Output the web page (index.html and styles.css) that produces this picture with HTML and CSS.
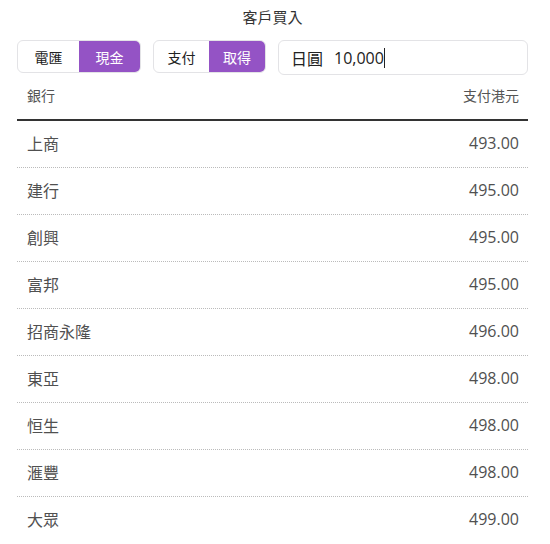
FILE: index.html
```html
<!DOCTYPE html>
<html>
<head>
<meta charset="utf-8">
<link rel="stylesheet" href="styles.css">
</head>
<body>
<div class="page">
  <div class="title">客戶買入</div>
  <div class="controls">
    <div class="seg seg-a">
      <div class="opt">電匯</div>
      <div class="opt active">現金</div>
    </div>
    <div class="seg seg-b">
      <div class="opt">支付</div>
      <div class="opt active">取得</div>
    </div>
    <div class="amount">
      <span class="cur">日圓</span><span class="val">10,000</span><span class="caret"></span>
    </div>
  </div>
  <div class="thead">
    <span>銀行</span><span>支付港元</span>
  </div>
  <div class="rows">
    <div class="row"><span>上商</span><span class="num">493.00</span></div>
    <div class="row"><span>建行</span><span class="num">495.00</span></div>
    <div class="row"><span>創興</span><span class="num">495.00</span></div>
    <div class="row"><span>富邦</span><span class="num">495.00</span></div>
    <div class="row"><span>招商永隆</span><span class="num">496.00</span></div>
    <div class="row"><span>東亞</span><span class="num">498.00</span></div>
    <div class="row"><span>恒生</span><span class="num">498.00</span></div>
    <div class="row"><span>滙豐</span><span class="num">498.00</span></div>
    <div class="row"><span>大眾</span><span class="num">499.00</span></div>
  </div>
</div>
</body>
</html>
```
FILE: styles.css
```css
html, body {
  margin: 0;
  padding: 0;
  background: #fff;
}
body {
  font-family: "Open Sans", "Noto Sans CJK TC", sans-serif;
  color: #444;
  overflow: hidden;
}
.page {
  width: 511px;
  margin-left: 17px;
}
.title {
  text-align: center;
  font-size: 15px;
  line-height: 20px;
  padding-top: 7px;
  color: #333;
}
.controls {
  display: flex;
  gap: 12px;
  margin-top: 13px;
  height: 34px;
}
.seg {
  display: flex;
  border: 1px solid #e3e3e6;
  border-radius: 6px;
  overflow: hidden;
  box-sizing: border-box;
  height: 33px;
}
.opt {
  display: flex;
  align-items: center;
  justify-content: center;
  font-size: 14px;
  color: #222;
}
.seg-a .opt:first-child { width: 61px; }
.seg-a .opt:last-child { width: 61px; }
.seg-b .opt:first-child { width: 55px; }
.seg-b .opt:last-child { width: 56px; }
.opt.active {
  background: #9453c5;
  color: #fff;
}
.amount {
  flex: 1;
  border: 1px solid #e3e3e6;
  border-radius: 6px;
  box-sizing: border-box;
  height: 35px;
  display: flex;
  align-items: center;
  padding-left: 12px;
  font-size: 16px;
  color: #222;
}
.cur { margin-right: 11px; }
.caret {
  display: inline-block;
  width: 1px;
  height: 20px;
  background: #222;
}
.thead {
  display: flex;
  justify-content: space-between;
  padding: 12px 9px 0 10px;
  height: 33px;
  font-size: 14px;
  line-height: 19px;
  color: #555;
  border-bottom: 2px solid #333;
}
.row {
  display: flex;
  justify-content: space-between;
  align-items: center;
  height: 43px;
  padding: 0 9px 3px 10px;
  font-size: 16px;
  color: #505050;
  border-bottom: 1px dotted #bbb;
}
.row:last-child {
  border-bottom: none;
}
```
